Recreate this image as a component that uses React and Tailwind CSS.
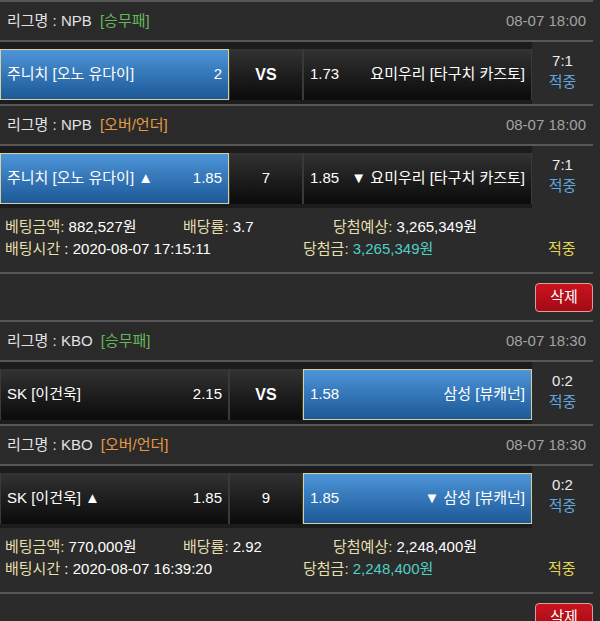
import React from "react";

const bets = [
  {
    rows: [
      {
        league: "NPB",
        type: "[승무패]",
        typeColor: "text-[#63b95a]",
        time: "08-07 18:00",
        home: "주니치 [오노 유다이]",
        homeOdds: "2",
        mid: "VS",
        away: "요미우리 [타구치 카즈토]",
        awayOdds: "1.73",
        pick: "home",
        score: "7:1",
      },
      {
        league: "NPB",
        type: "[오버/언더]",
        typeColor: "text-[#e39a45]",
        time: "08-07 18:00",
        home: "주니치 [오노 유다이] ▲",
        homeOdds: "1.85",
        mid: "7",
        away: "▼ 요미우리 [타구치 카즈토]",
        awayOdds: "1.85",
        pick: "home",
        score: "7:1",
      },
    ],
    amount: "882,527원",
    rate: "3.7",
    expect: "3,265,349원",
    betTime: "2020-08-07 17:15:11",
    win: "3,265,349원",
  },
  {
    rows: [
      {
        league: "KBO",
        type: "[승무패]",
        typeColor: "text-[#63b95a]",
        time: "08-07 18:30",
        home: "SK [이건욱]",
        homeOdds: "2.15",
        mid: "VS",
        away: "삼성 [뷰캐넌]",
        awayOdds: "1.58",
        pick: "away",
        score: "0:2",
      },
      {
        league: "KBO",
        type: "[오버/언더]",
        typeColor: "text-[#e39a45]",
        time: "08-07 18:30",
        home: "SK [이건욱] ▲",
        homeOdds: "1.85",
        mid: "9",
        away: "▼ 삼성 [뷰캐넌]",
        awayOdds: "1.85",
        pick: "away",
        score: "0:2",
      },
    ],
    amount: "770,000원",
    rate: "2.92",
    expect: "2,248,400원",
    betTime: "2020-08-07 16:39:20",
    win: "2,248,400원",
  },
];

const blue =
  "bg-gradient-to-b from-[#4d95d8] to-[#1c5998] border border-[#d8d09c]";
const dark =
  "bg-gradient-to-b from-[#333333] to-[#0b0b0b] border-x border-[#3a3a3a]";

function GameRow({ r }) {
  return (
    <>
      {/* HEADER */}
      <div className="flex items-center justify-between h-[42px] px-[7px] border-y-2 border-[#575757] bg-[#2a2a2a]">
        <p className="text-[#e2e2e2]">
          리그명 : {r.league} <span className={`ml-1 ${r.typeColor}`}>{r.type}</span>
        </p>
        <span className="text-[#a3a3a3]">{r.time}</span>
      </div>

      {/* MATCH */}
      <div className="flex h-[62px] bg-[#1c1c1c]">
        <div className="flex pt-[7px]">
          <div
            className={`flex items-center justify-between w-[229px] h-[51px] px-[6px] text-white ${
              r.pick === "home" ? blue : dark
            }`}
          >
            <span>{r.home}</span>
            <span>{r.homeOdds}</span>
          </div>
          <div
            className={`flex items-center justify-center w-[74px] h-[51px] text-white ${dark} ${
              r.mid === "VS" ? "font-bold text-[16px]" : ""
            }`}
          >
            {r.mid}
          </div>
          <div
            className={`flex items-center justify-between w-[229px] h-[51px] px-[6px] text-white ${
              r.pick === "away" ? blue : dark
            }`}
          >
            <span>{r.awayOdds}</span>
            <span>{r.away}</span>
          </div>
        </div>
        <div className="flex flex-col items-center justify-center w-[61px] pb-[5px] bg-[#2b2b2b] leading-[21px]">
          <span className="text-[#ececec]">{r.score}</span>
          <span className="text-[#5fa6dd]">적중</span>
        </div>
      </div>
    </>
  );
}

export default function App() {
  return (
    <div className="min-h-[621px] bg-[#2b2b2b] text-[15px] font-['Liberation_Sans','Noto_Sans_CJK_KR',sans-serif] overflow-hidden">
      <div className="w-[593px]">
        {bets.map((b, i) => (
          <div key={i}>
            {b.rows.map((r, j) => (
              <GameRow key={j} r={r} />
            ))}

            {/* BET INFO */}
            <div className="h-[64px] pt-[8px] px-[5px] leading-[22px] bg-[#2b2b2b]">
              <div className="flex">
                <span className="w-[178px] text-white">
                  <span className="text-[#e6dfad]">베팅금액:</span> {b.amount}
                </span>
                <span className="w-[150px] text-white">
                  <span className="text-[#e6dfad]">배당률:</span> {b.rate}
                </span>
                <span className="text-white">
                  <span className="text-[#e6dfad]">당첨예상:</span> {b.expect}
                </span>
              </div>
              <div className="flex">
                <span className="w-[298px] text-white">
                  <span className="text-[#e6dfad]">배팅시간</span> : {b.betTime}
                </span>
                <span className="w-[245px] text-[#4fcfc6]">
                  <span className="text-[#e6dfad]">당첨금:</span> {b.win}
                </span>
                <span className="text-[#e3d754]">적중</span>
              </div>
            </div>

            {/* DELETE */}
            <div className="flex items-center justify-end h-[48px] border-t-2 border-[#575757]">
              <button className="w-[58px] h-[29px] rounded-[4px] border border-[#e39a9a] bg-gradient-to-b from-[#c8141f] to-[#a30a14] text-white">
                삭제
              </button>
            </div>
          </div>
        ))}
      </div>
    </div>
  );
}
